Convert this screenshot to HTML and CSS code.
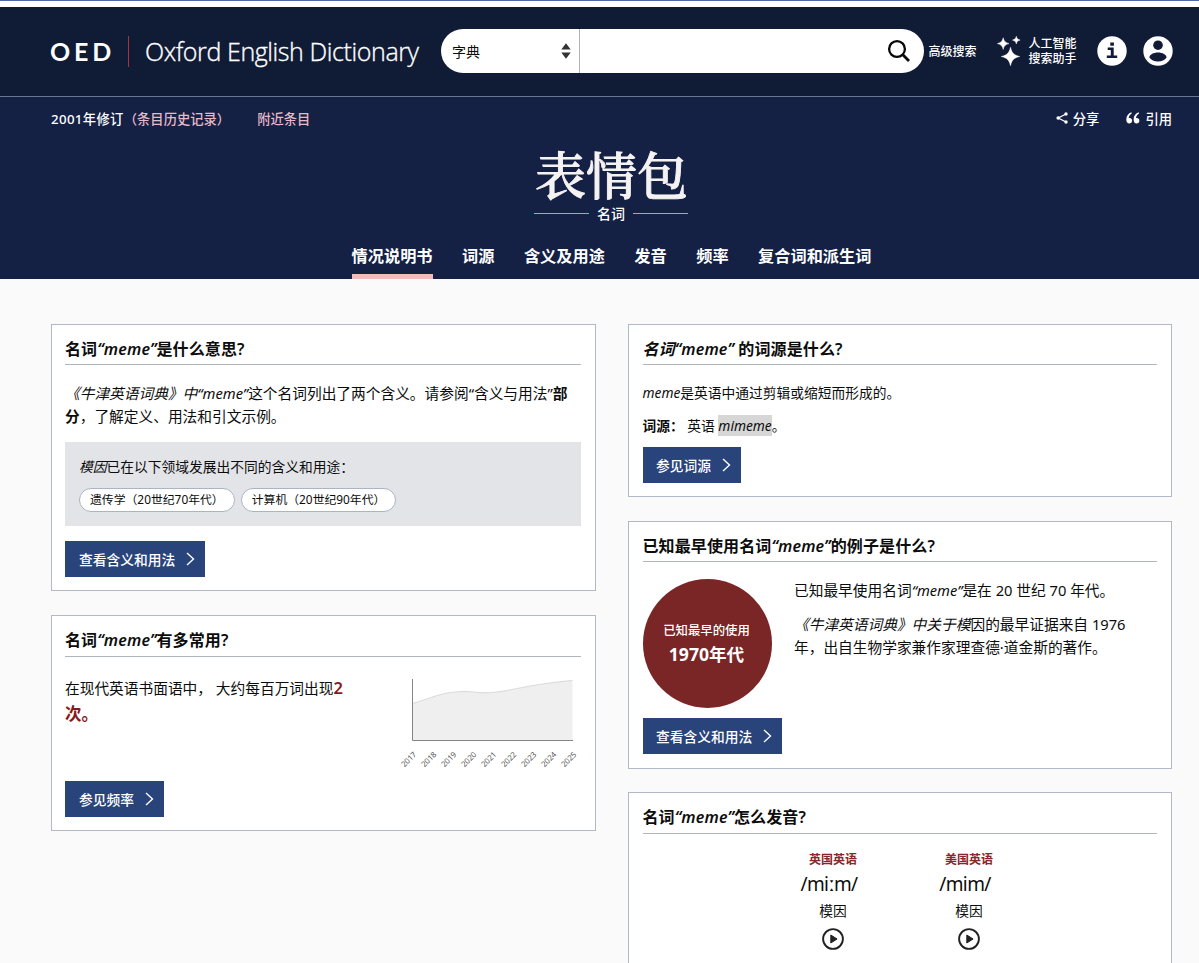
FILE: index.html
```html
<!DOCTYPE html>
<html lang="zh-CN">
<head>
<meta charset="utf-8">
<title>Oxford English Dictionary</title>
<link rel="stylesheet" href="styles.css">
</head>
<body>
<div class="topline"></div>
<header class="header">
  <a class="brand"><span class="brand-short">OED</span><span class="brand-bar"></span><span class="brand-full">Oxford English Dictionary</span></a>
  <div class="search">
    <div class="search-scope"><span>字典</span>
      <svg width="10" height="16" viewBox="0 0 10 16"><path d="M5 0.3 9.7 6.6H.3zM5 15.7.3 9.4h9.4z" fill="#333"/></svg>
    </div>
    <div class="search-field">
      <svg width="24" height="24" viewBox="0 0 24 24" fill="none" stroke="#080808"><circle cx="10" cy="10" r="7.9" stroke-width="2.3"/><path d="M15.6 15.6 22 22" stroke-width="2.8"/></svg>
    </div>
  </div>
  <a class="advanced">高级搜索</a>
  <a class="assistant">
    <svg width="24" height="30" viewBox="0 0 24 30" fill="#fff"><path d="M13.500 11.300C14.800 17 17 19.200 22.700 20.500 17 21.800 14.800 24 13.500 29.700 12.200 24 10 21.800 4.300 20.500 10 19.200 12.200 17 13.500 11.300zM6.200 1.800C7.100 5.400 8.400 6.700 12 7.600 8.400 8.500 7.100 9.800 6.200 13.400 5.300 9.800 4 8.500.400 7.600 4 6.700 5.300 5.400 6.200 1.800zM19.300.300C19.900 2.700 20.700 3.500 23.100 4.100 20.700 4.700 19.900 5.500 19.300 7.900 18.700 5.500 17.900 4.700 15.500 4.100 17.900 3.500 18.700 2.700 19.300.300z" stroke="#fff" stroke-width=".5"/></svg>
    <span>人工智能<br>搜索助手</span>
  </a>
  <svg class="info" width="30" height="30" viewBox="0 0 30 30"><circle cx="15" cy="15" r="14.700" fill="#fff"/><path d="M13.300 6.500h3.600v3.200h-3.600zM10.700 11.600h6v8h3.500v2.300H9.800v-2.300h4v-5.700h-3.100z" fill="#101b35"/></svg>
  <svg class="user" width="30" height="30" viewBox="0 0 30 30"><circle cx="15" cy="15" r="14.700" fill="#fff"/><circle cx="15" cy="9.200" r="4.800" fill="#101b35"/><path d="M15 16.600c4.500 0 8.600 2.300 8.600 4.800-1.800 2.600-4.900 4-8.600 4s-6.800-1.400-8.600-4c0-2.500 4.100-4.800 8.600-4.800z" fill="#101b35"/></svg>
</header>

<section class="hero">
  <div class="meta">
    <span class="revised">2001年修订</span><a class="history">（条目历史记录）</a><a class="nearby">附近条目</a>
    <div class="tools">
      <a class="tool"><svg width="12" height="12" viewBox="0 0 12 12"><path d="M10 2 2.300 6 10 10" fill="none" stroke="#fff" stroke-width="1.300"/><g fill="#fff"><circle cx="10" cy="2" r="1.700"/><circle cx="2.200" cy="6" r="1.800"/><circle cx="10" cy="10" r="1.700"/></g></svg>分享</a>
      <a class="tool"><svg width="14" height="12" viewBox="0 0 14 12"><g fill="#fff"><path id="q" d="M5.400.300C2.400 1.300.300 4 .300 7.800c0 2.400 1.200 3.800 3 3.800 1.600 0 2.800-1.200 2.800-2.800S5 6.100 3.500 6.100c-.4 0-.7.1-.9.200.2-2 1.300-3.800 3.100-4.900z"/><use href="#q" x="7.300"/></g></svg>引用</a>
    </div>
  </div>
  <h1 class="headword">表情包</h1>
  <div class="pos"><span>名词</span></div>
  <nav class="tabs">
    <a class="tab tab-active">情况说明书</a><a class="tab">词源</a><a class="tab">含义及用途</a><a class="tab">发音</a><a class="tab">频率</a><a class="tab">复合词和派生词</a>
  </nav>
</section>

<main class="content">
  <div class="column">
    <section class="card">
      <h2 class="title">名词<i>“meme”</i>是什么意思?</h2>
      <p class="text meaning"><i>《牛津英语词典》中“meme”</i>这个名词列出了两个含义。请参阅“含义与用法”<b>部<br>分</b>，了解定义、用法和引文示例。</p>
      <div class="topics">
        <p class="topics-text"><i>模因</i>已在以下领域发展出不同的含义和用途：</p>
        <div class="pills"><span class="pill">遗传学（20世纪70年代）</span><span class="pill">计算机（20世纪90年代）</span></div>
      </div>
      <a class="button">查看含义和用法<svg width="9" height="14" viewBox="0 0 9 14"><path d="M1 1l6.500 6L1 13"/></svg></a>
    </section>

    <section class="card">
      <h2 class="title title-tall">名词<i>“meme”</i>有多常用?</h2>
      <div class="frequency">
        <p class="text frequency-text">在现代英语书面语中， 大约每百万词出现<strong>2<br>次。</strong></p>
        <svg class="chart" width="184" height="96" viewBox="0 0 184 96">
          <path d="M15.500 29.500C35 24 44 18 66 17.500 79 17.300 84 20.500 104 17.500 120 15 140 9.500 175.500 6.500V66h-160z" fill="#efefef"/>
          <path d="M15.500 29.500C35 24 44 18 66 17.500 79 17.300 84 20.500 104 17.500 120 15 140 9.500 175.500 6.500" fill="none" stroke="#d9d9d9"/>
          <path d="M15.500 5v61.500H176" fill="none" stroke="#858585"/>
          <g class="years">
            <text transform="translate(20 81) rotate(-45)">2017</text><text transform="translate(40 81) rotate(-45)">2018</text><text transform="translate(60 81) rotate(-45)">2019</text><text transform="translate(80 81) rotate(-45)">2020</text><text transform="translate(100 81) rotate(-45)">2021</text><text transform="translate(120 81) rotate(-45)">2022</text><text transform="translate(140 81) rotate(-45)">2023</text><text transform="translate(160 81) rotate(-45)">2024</text><text transform="translate(180 81) rotate(-45)">2025</text>
          </g>
        </svg>
      </div>
      <a class="button">参见频率<svg width="9" height="14" viewBox="0 0 9 14"><path d="M1 1l6.500 6L1 13"/></svg></a>
    </section>
  </div>

  <div class="column column-right">
    <section class="card">
      <h2 class="title"><i>名词“meme”</i> 的词源是什么?</h2>
      <p class="text small origin"><i>meme</i>是英语中通过剪辑或缩短而形成的。</p>
      <p class="text small source"><b>词源：</b><span class="lang">英语</span> <i class="etymon">mimeme</i>。</p>
      <a class="button">参见词源<svg width="9" height="14" viewBox="0 0 9 14"><path d="M1 1l6.500 6L1 13"/></svg></a>
    </section>

    <section class="card card-earliest">
      <h2 class="title">已知最早使用名词<i>“meme”</i>的例子是什么?</h2>
      <div class="earliest">
        <div class="disc"><span>已知最早的使用</span><strong>1970年代</strong></div>
        <div class="evidence">
          <p class="text">已知最早使用名词<i>“meme”</i>是在 20 世纪 70 年代。</p>
          <p class="text"><i>《牛津英语词典》中关于模</i>因的最早证据来自 1976<br>年，出自生物学家兼作家理查德·道金斯的著作。</p>
        </div>
      </div>
      <a class="button">查看含义和用法<svg width="9" height="14" viewBox="0 0 9 14"><path d="M1 1l6.500 6L1 13"/></svg></a>
    </section>

    <section class="card card-last">
      <h2 class="title title-tall">名词<i>“meme”</i>怎么发音?</h2>
      <div class="sounds">
        <div class="sound"><span class="region">英国英语</span><span class="ipa">/miːm/</span><span class="respell">模因</span>
          <svg width="22" height="22" viewBox="0 0 22 22"><circle cx="11" cy="11" r="9.900" fill="none" stroke="#222" stroke-width="1.900"/><path d="M8.800 7v8l6.300-4z" fill="#222" stroke="#222" stroke-linejoin="round"/></svg></div>
        <div class="sound"><span class="region">美国英语</span><span class="ipa">/mim/</span><span class="respell">模因</span>
          <svg width="22" height="22" viewBox="0 0 22 22"><circle cx="11" cy="11" r="9.900" fill="none" stroke="#222" stroke-width="1.900"/><path d="M8.800 7v8l6.300-4z" fill="#222" stroke="#222" stroke-linejoin="round"/></svg></div>
      </div>
    </section>
  </div>
</main>
</body>
</html>
```

FILE: styles.css
```css
* { box-sizing: border-box; }
body {
  margin: 0;
  background: #fafafa;
  color: #0c0c0c;
  font-family: "Noto Sans", "Noto Sans CJK SC", sans-serif;
}
h1, h2, p { margin: 0; }
svg { display: block; flex: none; }

.topline { height: 7px; background: #fff; border-top: 1px solid #5468a3; }

.header {
  height: 90px;
  padding: 0 26.500px 1px 50px;
  display: flex;
  align-items: center;
  background: #101b35;
  border-bottom: 1px solid #6a7594;
  color: #fff;
}
.brand { width: 391px; display: flex; align-items: center; white-space: nowrap; font-family: "Open Sans", sans-serif; }
.brand-short { width: 78px; font-size: 25px; font-weight: 700; letter-spacing: 3.800px; font-family: Lato, sans-serif; }
.brand-bar { width: 1px; height: 31px; background: #a33638; }
.brand-full { margin-left: 16px; font-size: 25px; font-weight: 300; letter-spacing: -0.400px; -webkit-text-stroke: 0.350px #fff; }
.search { width: 483px; height: 44px; display: flex; border-radius: 22px; background: #fff; color: #0c0c0c; }
.search-scope {
  width: 139px;
  padding: 0 8px 0 11px;
  display: flex;
  align-items: center;
  justify-content: space-between;
  border-right: 1px solid #a9b0c0;
  font-size: 14px;
}
.search-field { flex: 1; display: flex; align-items: center; justify-content: flex-end; padding-right: 13px; }
.advanced { margin-left: 4.500px; font-size: 12px; font-weight: 500; white-space: nowrap; }
.assistant { margin-left: 20.500px; display: flex; align-items: center; gap: 7.500px; font-size: 12px; font-weight: 500; line-height: 15px; white-space: nowrap; }
.info { margin-left: auto; }
.user { margin-left: 16px; }

.hero { height: 182px; display: flex; flex-direction: column; background: #142044; color: #fff; }
.meta { height: 42px; padding: 0 27px 0 51px; display: flex; align-items: center; font-size: 13.300px; font-weight: 500; }
.revised { letter-spacing: 0.350px; }
.history, .nearby { color: #e7b9c8; }
.nearby { margin-left: 27px; }
.tools { margin-left: auto; display: flex; gap: 27px; }
.tool { display: flex; align-items: center; gap: 5px; }
.headword {
  height: 64px;
  padding-left: 24px;
  text-align: center;
  color: #f5f2f2;
  font: 500 51px/68px "Noto Serif CJK SC", "Noto Sans CJK SC", serif;
  -webkit-text-stroke: 0.900px #f5f2f2;
}
.pos { height: 20px; padding-left: 23px; display: flex; align-items: center; justify-content: center; gap: 8px; font-size: 14px; font-weight: 500; }
.pos::before, .pos::after { content: ""; width: 55px; height: 1px; background: #b99bb5; }
.tabs { flex: 1; padding-left: 24px; display: flex; align-items: flex-end; justify-content: center; gap: 29.500px; }
.tab { height: 36px; font-size: 16.200px; font-weight: 700; line-height: 26px; border-bottom: 5px solid transparent; }
.tab-active { border-color: #f0bcbe; }

.content { height: 684px; overflow: hidden; padding: 45px 27px 0 51px; display: grid; grid-template-columns: 545px 544px; gap: 32px; align-items: start; }
.column { display: flex; flex-direction: column; gap: 24px; }
.card { padding: 0 14px 13px 13px; background: #fff; border: 1px solid #b0b9c8; white-space: nowrap; }
.column-right .card { padding-left: 13.500px; }
.card-earliest { padding-bottom: 14px; margin-bottom: -1px; }
.card-last { height: 240px; }
.title { height: 40px; padding-top: 12px; border-bottom: 1px solid #b0b5bd; font-size: 16px; font-weight: 600; line-height: 24px; letter-spacing: 0.120px; }
.title-tall { height: 41px; }
.text { font-size: 14.710px; line-height: 23px; }
.small { font-size: 13.750px; line-height: 23.500px; }
.meaning { margin-top: 17px; }
.topics { height: 84px; margin: 14px 0 15px; padding: 13px 14px; background: #e3e4e8; }
.topics-text { font-size: 13.750px; line-height: 24px; }
.pills { display: flex; gap: 6px; margin-top: 9px; }
.pill { height: 24px; padding: 0 10px; border: 1px solid #abb4c3; border-radius: 12px; background: #fff; font-size: 11.850px; line-height: 21px; }
.button {
  width: fit-content;
  height: 36px;
  padding: 0 10px 0 14px;
  display: flex;
  align-items: center;
  gap: 11px;
  background: #29437b;
  color: #fff;
  font-size: 13.750px;
  font-weight: 500;
}
.column-right .button { padding-left: 13.500px; }
.button path { fill: none; stroke: #fff; stroke-width: 1.400; }

.frequency { display: flex; justify-content: space-between; height: 107px; margin-bottom: 17px; padding-top: 17px; }
.frequency-text { padding-top: 1px; line-height: 25px; }
.frequency-text strong { color: #85191c; font-size: 16.500px; font-weight: 600; }
.years { font-size: 7.800px; fill: #555; text-anchor: end; }

.origin { margin-top: 16px; }
.source { margin: 9px 0 10px; }
.source .lang { margin-left: 3.500px; }
.etymon { padding: 1px 0; background: #d6d6d6; }

.earliest { display: flex; gap: 22.500px; margin: 17px 0 10px; }
.disc {
  width: 129px;
  height: 129px;
  border-radius: 50%;
  display: flex;
  flex-direction: column;
  align-items: center;
  justify-content: center;
  padding: 2px 1px 0 0;
  background: #7a2626;
  color: #fff;
  font-size: 12.400px;
  font-weight: 500;
  line-height: 20px;
}
.disc strong { font-size: 17.600px; line-height: 27px; }
.evidence { display: flex; flex-direction: column; gap: 11px; }

.sounds { display: flex; gap: 80px; padding: 17px 0 0 162.500px; }
.sound { width: 56px; display: flex; flex-direction: column; align-items: center; }
.region { font-size: 12px; font-weight: 700; line-height: 18px; color: #8a2528; }
.ipa { margin-right: 8px; font-size: 19px; line-height: 31px; letter-spacing: -0.600px; }
.respell { margin-bottom: 6px; font-size: 13.750px; line-height: 22px; }
```
